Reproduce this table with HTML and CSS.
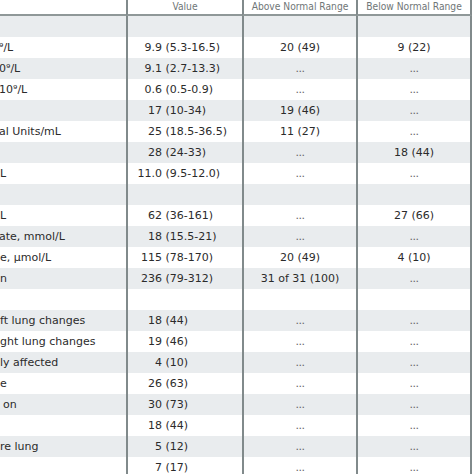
FILE: index.html
```html
<!DOCTYPE html>
<html>
<head>
<meta charset="utf-8">
<link rel="stylesheet" href="styles.css">
</head>
<body>
<div class="table">
  <div class="row head">
    <div class="c1"></div>
    <div class="c2 hc">Value</div>
    <div class="c3 hc">Above Normal Range</div>
    <div class="c4 hc">Below Normal Range</div>
  </div>
  <div class="row alt"><div class="c1"></div><div class="c2"></div><div class="c3"></div><div class="c4"></div></div>
  <div class="row"><div class="c1"><span class="lbl k3">10⁹/L</span></div><div class="c2"><span class="n">9.9</span> (5.3-16.5)</div><div class="c3">20 (49)</div><div class="c4">9 (22)</div></div>
  <div class="row alt"><div class="c1"><span class="lbl k2">10⁹/L</span></div><div class="c2"><span class="n">9.1</span> (2.7-13.3)</div><div class="c3 d">...</div><div class="c4 d">...</div></div>
  <div class="row"><div class="c1"><span class="lbl k0">10⁹/L</span></div><div class="c2"><span class="n">0.6</span> (0.5-0.9)</div><div class="c3 d">...</div><div class="c4 d">...</div></div>
  <div class="row alt"><div class="c1"></div><div class="c2"><span class="n">17</span> (10-34)</div><div class="c3">19 (46)</div><div class="c4 d">...</div></div>
  <div class="row"><div class="c1"><span class="lbl k1">nal Units/mL</span></div><div class="c2"><span class="n">25</span> (18.5-36.5)</div><div class="c3">11 (27)</div><div class="c4 d">...</div></div>
  <div class="row alt"><div class="c1"></div><div class="c2"><span class="n">28</span> (24-33)</div><div class="c3 d">...</div><div class="c4">18 (44)</div></div>
  <div class="row"><div class="c1"><span class="lbl">L</span></div><div class="c2"><span class="n">11.0</span> (9.5-12.0)</div><div class="c3 d">...</div><div class="c4 d">...</div></div>
  <div class="row alt"><div class="c1"></div><div class="c2"></div><div class="c3"></div><div class="c4"></div></div>
  <div class="row"><div class="c1"><span class="lbl">L</span></div><div class="c2"><span class="n">62</span> (36-161)</div><div class="c3 d">...</div><div class="c4">27 (66)</div></div>
  <div class="row alt"><div class="c1"><span class="lbl k1">nate, mmol/L</span></div><div class="c2"><span class="n">18</span> (15.5-21)</div><div class="c3 d">...</div><div class="c4 d">...</div></div>
  <div class="row"><div class="c1"><span class="lbl">e, µmol/L</span></div><div class="c2"><span class="n">115</span> (78-170)</div><div class="c3">20 (49)</div><div class="c4">4 (10)</div></div>
  <div class="row alt"><div class="c1"><span class="lbl">n</span></div><div class="c2"><span class="n">236</span> (79-312)</div><div class="c3">31 of 31 (100)</div><div class="c4 d">...</div></div>
  <div class="row"><div class="c1"></div><div class="c2"></div><div class="c3"></div><div class="c4"></div></div>
  <div class="row alt"><div class="c1"><span class="lbl">ft lung changes</span></div><div class="c2"><span class="n">18</span> (44)</div><div class="c3 d">...</div><div class="c4 d">...</div></div>
  <div class="row"><div class="c1"><span class="lbl">ght lung changes</span></div><div class="c2"><span class="n">19</span> (46)</div><div class="c3 d">...</div><div class="c4 d">...</div></div>
  <div class="row alt"><div class="c1"><span class="lbl">ly affected</span></div><div class="c2"><span class="n">4</span> (10)</div><div class="c3 d">...</div><div class="c4 d">...</div></div>
  <div class="row"><div class="c1"><span class="lbl">e</span></div><div class="c2"><span class="n">26</span> (63)</div><div class="c3 d">...</div><div class="c4 d">...</div></div>
  <div class="row alt"><div class="c1"><span class="lbl ind">on</span></div><div class="c2"><span class="n">30</span> (73)</div><div class="c3 d">...</div><div class="c4 d">...</div></div>
  <div class="row"><div class="c1"></div><div class="c2"><span class="n">18</span> (44)</div><div class="c3 d">...</div><div class="c4 d">...</div></div>
  <div class="row alt"><div class="c1"><span class="lbl">re lung</span></div><div class="c2"><span class="n">5</span> (12)</div><div class="c3 d">...</div><div class="c4 d">...</div></div>
  <div class="row"><div class="c1"></div><div class="c2"><span class="n">7</span> (17)</div><div class="c3 d">...</div><div class="c4 d">...</div></div>
</div>
</body>
</html>
```

FILE: styles.css
```css
html, body {
  margin: 0;
  padding: 0;
  background: #ffffff;
}
body {
  width: 474px;
  height: 474px;
  overflow: hidden;
  font-family: "DejaVu Sans", Verdana, sans-serif;
  font-size: 11px;
  color: #2b2b2b;
}
.table {
  display: flex;
  flex-direction: column;
}
.row {
  display: grid;
  grid-template-columns: 126px 116px 114px 116px;
  height: 21px;
  line-height: 21px;
  white-space: nowrap;
}
.row.alt > div {
  background: #e9ecee;
}
.row > div {
  box-sizing: border-box;
  overflow: hidden;
}
.c2, .c3, .c4 {
  border-left: 2px solid #818a8b;
}
.c4 {
  border-right: 2px solid #818a8b;
}
.c3, .c4 {
  text-align: center;
}
.n {
  display: inline-block;
  width: 34px;
  text-align: right;
}
.d {
  color: #666666;
  letter-spacing: -0.5px;
}
.head {
  height: 16px;
  line-height: 14px;
}
.head > div {
  border-bottom: 2px solid #8f9898;
}
.hc {
  text-align: center;
  font-family: "DejaVu Sans Condensed", "DejaVu Sans", sans-serif;
  font-size: 10.2px;
  color: #6f7677;
}
.lbl {
  display: inline-block;
}
.k0 {
  margin-left: -1px;
}
.k1 {
  margin-left: -8px;
}
.k2 {
  margin-left: -8px;
}
.k3 {
  margin-left: -15px;
}
.ind {
  margin-left: 3px;
}
```
